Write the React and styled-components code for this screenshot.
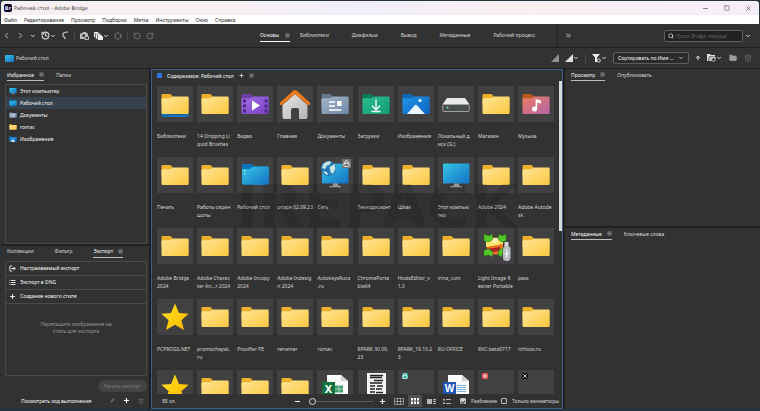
import React from 'react';
import styled, { createGlobalStyle } from 'styled-components';
import { ArrowUp, ChevronDown, ChevronLeft, ChevronRight, ChevronsRight, Folder, History, List, Lock, LogOut, Menu, Minus, Pencil, Plus, RotateCcw, RotateCw, Search, Square, Trash2, X } from 'lucide-react';

const COLOR = {
  panel: '#323232',
  gap: '#1d1f21',
  line: '#4a4a4a',
  text: '#d6d6d6',
  bright: '#fafafa',
  dim: '#6c6c6c',
  blue: '#3e6086',
};

const GlobalStyle = createGlobalStyle`
  * {
    box-sizing: border-box;
  }
  body {
    margin: 0;
    background: #26343f;
  }
  button, input, select {
    font: inherit;
    color: inherit;
    margin: 0;
  }
  svg {
    display: block;
    flex-shrink: 0;
  }
`

const Window = styled.div`
  display: flex;
  flex-direction: column;
  height: 100vh;
  padding: 1px 1px 2px;
  font-family: 'Noto Sans', 'Open Sans', sans-serif;
  font-size: 5px;
  line-height: 8px;
  color: ${COLOR.text};
  background: #26343f;
`

const TitleBar = styled.header`
  display: flex;
  align-items: center;
  gap: 2px;
  height: 14px;
  padding: 0 7px 0 3px;
  font-family: 'DejaVu Sans', sans-serif;
  color: #3a3638;
  border-radius: 3px 3px 0 0;
  background: linear-gradient(90deg, #f6eff1 0%, #f7f0f2 30%, #efeefa 47%, #faeff0 68%, #f5eefa 100%);
`

const AppBadge = styled.span`
  width: 8px;
  height: 8px;
  border-radius: 2px;
  text-align: center;
  font-weight: 700;
  color: #e4e4ff;
  background: #05052a;
`

const WindowButtons = styled.div`
  display: flex;
  gap: 15px;
  margin-left: auto;
`

const MenuBar = styled.nav`
  display: flex;
  align-items: center;
  gap: 7px;
  height: 9px;
  padding: 0 3px;
  background: #fff;
`

const PlainButton = styled.button`
  display: flex;
  align-items: center;
  padding: 0;
  border: none;
  background: none;
  white-space: nowrap;
  cursor: pointer;
  color: ${({$color}) => $color || 'inherit'};
`

const MenuItem = styled(PlainButton)`
  color: #1c1c1c;
`

const Toolbar = styled.div`
  display: flex;
  align-items: center;
  height: 23px;
  flex-shrink: 0;
  padding-right: 8px;
  background: ${COLOR.panel};
`

const ToolGroup = styled.div`
  display: flex;
  align-items: center;
  gap: ${({$gap}) => $gap}px;
  margin-left: ${({$push}) => $push ? 'auto' : '0'};
`

const NavTools = styled.div`
  display: flex;
  align-items: center;
  gap: 5px;
  width: 259px;
  padding-left: 1px;
`

const Divider = styled.span`
  width: 1px;
  height: ${({$tall}) => $tall ? '22px' : '9px'};
  background: ${({$tall}) => $tall ? '#242424' : '#484848'};
`

const Workspaces = styled.nav`
  display: flex;
  gap: 23px;
`

const Workspace = styled(PlainButton)`
  height: 12px;
  gap: 6px;
  color: ${({$active}) => $active ? COLOR.bright : COLOR.text};
  border-bottom: 1px solid ${({$active}) => $active ? COLOR.bright : 'transparent'};
  margin-right: ${({$active}) => $active ? '-13px' : '0'};
`

const MoreWorkspaces = styled.div`
  display: flex;
  align-items: center;
  gap: 7px;
  margin-left: 22px;
`

const SearchBox = styled.label`
  display: flex;
  align-items: center;
  gap: 2px;
  width: 79px;
  height: 12px;
  padding: 0 3px;
  border: 1px solid #606060;
  border-radius: 2px;
  background: #222;
  input {
    flex: 1;
    min-width: 0;
    padding: 0;
    border: none;
    outline: none;
    background: none;
    &::placeholder {
      color: #666;
      font-style: italic;
      opacity: 1;
    }
  }
`

const PathBar = styled.div`
  display: flex;
  align-items: center;
  height: 21px;
  flex-shrink: 0;
  padding: 0 7px 0 4px;
  gap: 2px;
  border-top: 1px solid ${COLOR.gap};
  background: ${COLOR.panel};
`

const SortSelect = styled.div`
  display: flex;
  align-items: center;
  width: 76px;
  height: 12px;
  padding: 0 4px;
  border: 1px solid #5c5c5c;
  border-radius: 2px;
  background: #2b2b2b;
  select {
    flex: 1;
    min-width: 0;
    padding: 0;
    border: none;
    outline: none;
    appearance: none;
    background: none;
    color: ${COLOR.bright};
  }
`

const Main = styled.main`
  display: grid;
  grid-template-columns: 148px minmax(0, 1fr) 194px;
  gap: 2px;
  flex: 1;
  min-height: 0;
  padding-top: 1px;
  background: ${COLOR.gap};
`

const Column = styled.div`
  display: flex;
  flex-direction: column;
  gap: 2px;
  min-height: 0;
`

const Panel = styled.section`
  display: flex;
  flex-direction: column;
  flex: ${({$flex}) => $flex} 1 0;
  min-height: 0;
  padding: 0 2px 0 4px;
  background: ${COLOR.panel};
`

const PanelTabs = styled.div`
  display: flex;
  flex-shrink: 0;
  align-items: flex-start;
  height: 15px;
  padding-left: 2px;
  gap: ${({$gap}) => $gap}px;
`

const PanelTab = styled(PlainButton)`
  height: 12px;
  gap: 5px;
  color: ${({$active}) => $active ? COLOR.bright : COLOR.text};
  border-bottom: 1px solid ${({$active}) => $active ? '#bdbdbd' : 'transparent'};
`

const Box = styled.div`
  flex: 1;
  min-height: 0;
  border: 1px solid ${COLOR.line};
  border-radius: 1px;
`

const FavoriteItem = styled.button`
  display: flex;
  align-items: center;
  gap: 3px;
  width: 100%;
  height: 12px;
  padding: 0 3px;
  border: none;
  text-align: left;
  color: ${COLOR.bright};
  background: ${({$selected}) => $selected ? '#35424e' : 'none'};
`

const ExportItem = styled.button`
  display: flex;
  align-items: center;
  gap: 4px;
  width: 100%;
  height: 14px;
  padding: 0 3px;
  border: none;
  border-bottom: 1px solid ${COLOR.line};
  text-align: left;
  color: ${COLOR.bright};
  background: none;
`

const DropHint = styled.p`
  margin: 17px 30px;
  line-height: 7px;
  text-align: center;
  color: #969696;
`

const StartButton = styled.button`
  align-self: flex-end;
  height: 12px;
  margin-top: 4px;
  padding: 0 6px;
  border: none;
  border-radius: 6px;
  color: #7c7c7c;
  background: #434343;
`

const ExportFooter = styled.div`
  display: flex;
  align-items: center;
  height: 17px;
  padding: 0 3px 0 16px;
  gap: 8px;
  a {
    flex: 1;
    color: ${COLOR.bright};
    text-decoration: none;
  }
`

const Content = styled.section`
  position: relative;
  display: flex;
  flex-direction: column;
  min-height: 0;
  border: 1px solid ${COLOR.blue};
  background: ${COLOR.panel};
`

const ContentHeader = styled.div`
  display: flex;
  align-items: center;
  flex-shrink: 0;
  gap: 5px;
  height: 11px;
  padding-left: 5px;
  color: ${COLOR.bright};
`

const BlueMark = styled.span`
  width: 5px;
  height: 5px;
  background: #2f74dc;
`

const Scroller = styled.div`
  display: flex;
  flex: 1;
  min-height: 0;
  overflow: hidden;
`

const Files = styled.ul`
  display: grid;
  grid-template-columns: repeat(10, 36px);
  grid-auto-rows: 71px;
  justify-content: space-between;
  flex: 1;
  margin: 0;
  padding: 5px 5px 0;
  list-style: none;
`

const Thumb = styled.div`
  position: relative;
  width: 36px;
  height: 36px;
  margin-bottom: 10px;
  background: #414141;
`

const FileName = styled.div`
  white-space: pre;
`

const LockBadge = styled.span`
  position: absolute;
  top: 2px;
  right: 2px;
  padding: 1px;
  color: #f0f0f0;
  background: #737373;
`

const AppMark = styled.span`
  position: absolute;
  top: 3px;
  left: 4px;
  width: 6px;
  height: 6px;
  border-radius: 1px;
  color: #fff;
  background: ${({$color}) => $color};
`

const ScrollBar = styled.div`
  width: 3px;
  height: 48%;
  background: #d3dad9;
`

const Watermark = styled.div`
  position: absolute;
  top: 103px;
  left: 84px;
  font: 700 59px/68px 'DejaVu Sans', sans-serif;
  color: rgba(20, 20, 20, 0.16);
  pointer-events: none;
`

const ContentFooter = styled.footer`
  display: flex;
  align-items: center;
  flex-shrink: 0;
  height: 14px;
  padding: 0 3px 0 10px;
`

const Zoom = styled.input`
  width: 64px;
  height: 8px;
  margin: 0 6px 0 8px;
  appearance: none;
  background: linear-gradient(#5a5a5a, #5a5a5a) center / 100% 1px no-repeat;
  &::-webkit-slider-thumb {
    appearance: none;
    width: 7px;
    height: 7px;
    border: 1px solid #d6d6d6;
    border-radius: 50%;
    background: ${COLOR.panel};
  }
`

const ViewModes = styled.div`
  display: flex;
  gap: 2px;
  margin: 0 2px 0 6px;
`

const ViewButton = styled.button`
  display: flex;
  align-items: center;
  justify-content: center;
  width: 14px;
  height: 12px;
  padding: 0;
  border: none;
  color: ${({$active}) => $active ? '#fff' : '#b5b5b5'};
  background: ${({$active}) => $active ? '#505050' : 'none'};
`

const Check = styled.label`
  display: flex;
  align-items: center;
  gap: 5px;
  margin-left: 4px;
  white-space: nowrap;
  input {
    display: grid;
    place-items: center;
    width: 6px;
    height: 6px;
    appearance: none;
    border: 1px solid #bdbdbd;
    border-radius: 1px;
    &:checked {
      background: #d2d2d2;
    }
    &:checked::after {
      content: '';
      width: 3px;
      height: 2px;
      border: solid #333;
      border-width: 0 0 1px 1px;
      transform: rotate(-45deg);
    }
  }
`

const Gradients = () => (
  <svg width="0" height="0" aria-hidden="true">
    <defs>
      {[
        ['yellow', '#ffe596', '#fdc83f'],
        ['purple', '#a070e6', '#7b3fc4'],
        ['steel', '#a5b6ca', '#6d86a3'],
        ['green', '#2fbd90', '#129a75'],
        ['azure', '#2095e8', '#0c62bf'],
        ['sunset', '#ec7c60', '#b565a8'],
        ['screen', '#35c6e4', '#1470c4'],
        ['silver', '#e6e6e6', '#b3b3b3'],
        ['gold', '#ffe11b', '#ffb900'],
      ].map(([id, from, to]) => (
        <linearGradient key={id} id={id} x1="0" y1="0" x2="1" y2="1">
          <stop offset="0" stopColor={from} />
          <stop offset="1" stopColor={to} />
        </linearGradient>
      ))}
    </defs>
  </svg>
)

const FolderShape = ({ tab = '#efb02c', fill = 'yellow', children }) => (
  <>
    <path d="M4.5 9q0-1 1-1h7.2q.8 0 1.4.6l2 2.4H29q2 0 2 2v6H4.5z" fill={tab} />
    <path d="M4.5 13.6q0-1.3 1.3-1.3h7.2l3.3-1.8H30.4q1.3 0 1.3 1.3v15q0 1.3-1.3 1.3H5.8q-1.3 0-1.3-1.3z" fill={`url(#${fill})`} />
    {children}
  </>
)

const MonitorShape = () => (
  <>
    <rect x="5" y="6.5" width="26.5" height="20" rx="1" fill="url(#screen)" />
    <path d="M16 26.500h5v2l3 .9v.8H12v-.8l4-.9z" fill="#a9b0b5" />
  </>
)

const drawings = {
  folder: <FolderShape />,
  library: <FolderShape><path d="M4.500 28.200h27.200v2.300q0 .5-.6.500h-26q-.6 0-.6-.5z" fill="#1171b8" /></FolderShape>,
  video: (
    <FolderShape tab="#6b3fa5" fill="purple">
      <path d="M6 13.500h3v3H6zm0 5h3v3H6zm0 5h3v3H6zM27.500 13.500h3v3h-3zm0 5h3v3h-3zm0 5h3v3h-3z" fill="#4c2685" />
      <path d="M15 14.500l8 5-8 5z" fill="#fff" />
    </FolderShape>
  ),
  home: (
    <>
      <path d="M5.500 19L18 8l12.500 11v12q0 2-2 2h-6.500v-9q0-2-2-2h-4q-2 0-2 2v9H7.500q-2 0-2-2z" fill="url(#silver)" />
      <path d="M3 18.500q-.8-1 .2-2L16.500 4.600q1.500-1.200 3 0L32.800 16.500q1 1 .2 2t-2.200.2L18 8 5.200 18.700q-1.200.8-2.200-.2z" fill="#ee7a1c" />
    </>
  ),
  documents: (
    <FolderShape tab="#66798d" fill="steel">
      <path d="M12 16h6M12 20h6M12 24h12.500" stroke="#fff" strokeWidth="1.500" />
      <path d="M20 15h4.500v5H20z" fill="#fff" />
    </FolderShape>
  ),
  downloads: (
    <FolderShape tab="#0a7d55" fill="green">
      <path d="M18 13.500v10M14 19.800l4 4 4-4M13.500 25.500h9" fill="none" stroke="#fff" strokeWidth="1.300" />
    </FolderShape>
  ),
  images: (
    <FolderShape tab="#1167b8" fill="azure">
      <path d="M9 28l7.500-8.500q1.300-1.300 2.600 0L27 28z" fill="#e9f5ff" />
      <circle cx="22" cy="14.500" r="1.500" fill="#fff" />
    </FolderShape>
  ),
  music: (
    <FolderShape tab="#bb5a1f" fill="sunset">
      <circle cx="16.500" cy="23" r="2.500" fill="#fff" />
      <path d="M17.600 23V13l5.400 1.500v3l-3.800-1V23z" fill="#fff" />
    </FolderShape>
  ),
  drive: (
    <>
      <path d="M9 12h18l4.500 6.500H4.500z" fill="#e9e9e9" />
      <rect x="4.800" y="18.500" width="26.400" height="7" rx="1" fill="#4a4d4e" stroke="#a8a8a8" strokeWidth=".9" />
      <circle cx="9.500" cy="21.500" r="1" fill="#6ee089" />
    </>
  ),
  desktop: (
    <>
      <path d="M5 8q0-1 1-1h9l2 2.500H31v18H6.500Q5 27.500 5 26z" fill="#0873bd" />
      <path d="M5 12h7.500l4-2.500h14q1.500 0 1.500 1.500v14.500q0 2.500-3 2.500H7q-2 0-2-2z" fill="url(#screen)" />
      <path d="M7 14h1.500M7 17h1.500" stroke="#d8f6ff" />
    </>
  ),
  network: (
    <>
      <MonitorShape />
      <circle cx="11.500" cy="11.500" r="7.500" fill="#2378b5" />
      <path d="M6 7.500q4-4.500 8-3l-1 3-3 1-2 3.500-3-1zM12.500 10l5-3 1 5-3 5-2-2zM6 14l4 1 1 3q-3 0-5-4z" fill="#c6e5e6" />
    </>
  ),
  computer: <MonitorShape />,
  star: <path d="M18 4.500l4 9.500 9.700.8-7.300 6.400 2.600 9.900L18 25.800l-9 5.300 2.600-9.900-7.300-6.400 9.700-.8z" fill="url(#gold)" />,
  resizer: (
    <>
      <path d="M9 9l16 1v16l-16 1z" fill="#ef7421" />
      <path d="M8 13l17-2v5L8 19z" fill="#ffe66b" />
      <path d="M8 21l14-2v4L8 25z" fill="#a82325" />
      <path d="M13 10h8l-3 5h-3z" fill="#fff1be" />
      <path d="M6 6l5 2 3-2 1 5-4 3-5-1zM28 6l-4 2-3-2-1 5 3 3 5-1zM6 28l5-1 3 2 1-5-4-3-5 1zM25 20l-4 2-1 5 4 2z" fill="#55c829" stroke="#226e12" strokeWidth=".5" />
      <rect x="26.500" y="14" width="4" height="6" fill="#d6d6d6" />
      <rect x="25" y="18" width="7.500" height="15" rx="3.500" fill="#b9bdc3" />
      <path d="M28.700 21v9m-2-5l2 2 2-3" fill="none" stroke="#f4f4f4" />
    </>
  ),
  excel: (
    <>
      <path d="M10 5h14l7 6v25H10z" fill="#fafafa" />
      <path d="M24 5v6h7z" fill="#cfd4d1" />
      <path d="M18 15.500h8v7h-8z" fill="#3d9c6b" />
      <path d="M18 19h8M22 15.500v7" stroke="#cfe9da" strokeWidth=".7" />
      <rect x="5" y="12" width="13" height="13" fill="#12703f" />
      <text x="11.500" y="22.500" textAnchor="middle" fontSize="11" fontWeight="700" fill="#fff">X</text>
    </>
  ),
  word: (
    <>
      <path d="M10 5h14l7 6v25H10z" fill="#fafafa" />
      <path d="M24 5v6h7z" fill="#ccd3de" />
      <path d="M19 15.500h9M19 17.500h9M19 19.500h9M19 21.500h9" stroke="#82b1dc" />
      <rect x="5" y="12" width="13" height="13" fill="#1d56b5" />
      <text x="11.500" y="22" textAnchor="middle" fontSize="10" fontWeight="700" fill="#fff">W</text>
    </>
  ),
  sheet: (
    <>
      <path d="M9 3h19v33H9z" fill="#f3f3f3" />
      <path d="M12 5.500h13M12 7.500h12M16 10.500h9M12 13h12M12 16h5M19 16h6M12 19h5M18 19h6M12 22h5M18 22.500h7" stroke="#222" strokeWidth="1.600" />
    </>
  ),
}

const Drawing = ({ name, size = 36 }) => (
  <svg width={size} height={size} viewBox={size < 36 ? '3 3 30 30' : '0 0 36 36'}>{drawings[name]}</svg>
)

const TriangleIcon = ({ color }) => (
  <svg width="8" height="8" viewBox="0 0 8 8"><path d="M8 0v8H0z" fill={color} /></svg>
)

const CameraIcon = () => (
  <svg width="9" height="8" viewBox="0 0 9 8">
    <path d="M0 1.500h2L3 0h3l.8 1.500H8V4H5v3H0z" fill="#bdbdbd" />
    <circle cx="3.800" cy="3.800" r="1.500" fill={COLOR.panel} />
    <path d="M5 4.500h3.500v3H5z" fill="none" stroke="#bdbdbd" />
  </svg>
)

const StackIcon = () => (
  <svg width="9" height="8" viewBox="0 0 9 8">
    <path d="M0 0h4v1H1v4H0zM2 1.500h4v1H3v4H2zM4 3h3l2 2v3H4z" fill="#efefef" stroke="#efefef" strokeWidth=".4" />
  </svg>
)

const FilterIcon = () => (
  <svg width="9" height="9" viewBox="0 0 9 9">
    <path d="M0 0h8L5 3.500V8H3V3.500z" fill="#ececec" />
    <circle cx="6.800" cy="6.500" r="1.600" fill={COLOR.panel} stroke="#ececec" strokeWidth=".9" />
  </svg>
)

const RecentFolderIcon = () => (
  <svg width="9" height="8" viewBox="0 0 9 8">
    <path d="M0 0h3l1 1h4v1.500H2L1 7H0z" fill="#dedede" />
    <path d="M2.500 3H9L7.500 7h-6z" fill="#bdbdbd" />
    <circle cx="6.500" cy="5.500" r="1.800" fill={COLOR.panel} stroke="#ececec" strokeWidth=".7" />
  </svg>
)

const GridIcon = () => (
  <svg width="10" height="7" viewBox="0 0 10 7">
    <path d="M.5.500h9v6h-9zM.5 3.500h9M3.500.500v6M6.500.500v6" fill="none" stroke="currentColor" strokeWidth=".7" />
  </svg>
)

const ThumbsIcon = () => (
  <svg width="8" height="6" viewBox="0 0 8 6">
    <path d="M0 0h2v2.500H0zM3 0h2v2.500H3zM6 0h2v2.500H6zM0 3.500h2V6H0zM3 3.500h2V6H3zM6 3.500h2V6H6z" fill="currentColor" />
  </svg>
)

const DetailsIcon = () => (
  <svg width="9" height="5" viewBox="0 0 9 5"><path d="M0 0h5v5H0zM6 0h3v1.300H6zM6 2h3v1H6zM6 4h3v1H6z" fill="currentColor" /></svg>
)

const ListIcon = () => (
  <svg width="8" height="5" viewBox="0 0 8 5"><path d="M0 0h2v1.500H0zM3 0h5v1H3zM0 3.500h2V5H0zM3 4h5v1H3z" fill="currentColor" /></svg>
)

const files = [
  ['library', 'Библиотеки'],
  ['folder', '14 Dripping Li\nquid Brushes'],
  ['video', 'Видео'],
  ['home', 'Главная'],
  ['documents', 'Документы'],
  ['downloads', 'Загрузки'],
  ['images', 'Изображения'],
  ['drive', 'Локальный д\nиск (G:)'],
  ['folder', 'Магазин'],
  ['music', 'Музыка'],
  ['folder', 'Печать'],
  ['folder', 'Работы скрин\nшоты'],
  ['desktop', 'Рабочий стол'],
  ['folder', 'рпарк 02.09.23'],
  ['network', 'Сеть'],
  ['folder', 'Технодисконт'],
  ['folder', 'Шлак'],
  ['computer', 'Этот компью\nтер'],
  ['folder', 'Adobe 2024'],
  ['folder', 'Adobe Autode\nsk'],
  ['folder', 'Adobe Bridge\n2024'],
  ['folder', 'Adobe Charac\nter An...r 2024'],
  ['folder', 'Adobe Incopy\n2024'],
  ['folder', 'Adobe Indesig\nn 2024'],
  ['folder', 'AutokeysRuza\n.ru'],
  ['folder', 'ChromePorta\nble64'],
  ['folder', 'HostsEditor_v\n1.3'],
  ['folder', 'irina_cum'],
  ['resizer', 'Light Image R\nesizer Portable'],
  ['folder', 'pass'],
  ['star', 'PCPROGS.NET'],
  ['folder', 'promozhaysk.\nru'],
  ['folder', 'Proxifier PE'],
  ['folder', 'renamer'],
  ['folder', 'romac'],
  ['folder', 'RPARK 30.09.\n23'],
  ['folder', 'RPARK_19.10.2\n3'],
  ['folder', 'RU-OFFICE'],
  ['folder', 'RVC-beta0717'],
  ['folder', 'rzhivov.ru'],
  ['star'],
  ['folder'],
  ['folder'],
  ['folder'],
  ['excel'],
  ['sheet'],
  ['mark', '', '#27a58c', Lock],
  ['word'],
  ['mark', '', '#e0565b', Plus],
  ['mark', '', '#151515', X],
]

const favorites = [
  ['computer', 'Этот компьютер'],
  ['desktop', 'Рабочий стол'],
  ['documents', 'Документы'],
  ['folder', 'romac'],
  ['images', 'Изображения'],
]

const Tab = ({ children }) => (
  <PanelTab $active>{children}<Menu size={5} /></PanelTab>
)

export default function App() {
  return (
    <Window>
      <GlobalStyle />
      <Gradients />
      <TitleBar>
        <AppBadge>Br</AppBadge>
        <span>Рабочий стол - Adobe Bridge</span>
        <WindowButtons>
          <PlainButton aria-label="Свернуть"><Minus size={7} /></PlainButton>
          <PlainButton aria-label="Развернуть"><Square size={6} /></PlainButton>
          <PlainButton aria-label="Закрыть"><X size={7} /></PlainButton>
        </WindowButtons>
      </TitleBar>
      <MenuBar>
        {['Файл', 'Редактирование', 'Просмотр', 'Подборки', 'Метка', 'Инструменты', 'Окно', 'Справка'].map((name) => (
          <MenuItem key={name}>{name}</MenuItem>
        ))}
      </MenuBar>
      <Toolbar>
        <NavTools>
          <PlainButton aria-label="Назад" $color="#858585"><ChevronLeft size={9} strokeWidth={3} /></PlainButton>
          <PlainButton aria-label="Вперёд" $color="#858585"><ChevronRight size={9} strokeWidth={3} /></PlainButton>
          <PlainButton aria-label="Папки"><ChevronDown size={6} strokeWidth={4} /></PlainButton>
          <PlainButton aria-label="Недавние"><History size={9} strokeWidth={3} /><ChevronDown size={6} strokeWidth={4} /></PlainButton>
          <PlainButton aria-label="Бумеранг">
            <svg width="8" height="9" viewBox="0 0 8 9"><path d="M7 1Q1 1 2 4.500L4.500 8" fill="none" stroke="currentColor" strokeWidth="1.200" /></svg>
          </PlainButton>
          <Divider />
          <PlainButton aria-label="Камера"><CameraIcon /></PlainButton>
          <PlainButton aria-label="Уточнить"><StackIcon /><ChevronDown size={6} strokeWidth={4} /></PlainButton>
          <PlainButton aria-label="Camera Raw" $color={COLOR.dim}>
            <svg width="8" height="8" viewBox="0 0 8 8"><circle cx="4" cy="4" r="3" fill="none" stroke="currentColor" strokeWidth="1.500" strokeDasharray="2.400 .74" /></svg>
          </PlainButton>
          <Divider />
          <PlainButton aria-label="Повернуть влево" $color={COLOR.dim}><RotateCcw size={8} strokeWidth={3} /></PlainButton>
          <PlainButton aria-label="Повернуть вправо" $color={COLOR.dim}><RotateCw size={8} strokeWidth={3} /></PlainButton>
        </NavTools>
        <Workspaces>
          <Workspace $active>Основы<Menu size={5} /></Workspace>
          {['Библиотеки', 'Диафильм', 'Вывод', 'Метаданные', 'Рабочий процесс'].map((name) => (
            <Workspace key={name}>{name}</Workspace>
          ))}
        </Workspaces>
        <MoreWorkspaces>
          <Divider $tall />
          <PlainButton aria-label="Ещё"><ChevronsRight size={7} strokeWidth={3} /></PlainButton>
        </MoreWorkspaces>
        <ToolGroup $gap={2} $push>
          <SearchBox>
            <Search size={6} strokeWidth={3} />
            <input placeholder="Поиск Bridge: текуще" aria-label="Поиск" />
          </SearchBox>
          <ChevronDown size={6} strokeWidth={4} />
        </ToolGroup>
      </Toolbar>
      <PathBar>
        <svg width="9" height="7" viewBox="0 0 9 7"><rect width="9" height="7" rx="1" fill="url(#screen)" /></svg>
        <span>Рабочий стол</span>
        <ToolGroup $gap={6} $push>
          <PlainButton aria-label="Качество"><TriangleIcon color="#909090" /></PlainButton>
          <PlainButton aria-label="Параметры качества"><TriangleIcon color="#dedede" /><ChevronDown size={6} strokeWidth={4} /></PlainButton>
          <Divider />
          <PlainButton aria-label="Фильтр"><FilterIcon /><ChevronDown size={6} strokeWidth={4} /></PlainButton>
          <SortSelect>
            <select aria-label="Сортировка">
              <option>Сортировать по Имя ...</option>
            </select>
            <ChevronDown size={6} strokeWidth={3} />
          </SortSelect>
          <PlainButton aria-label="По возрастанию"><ArrowUp size={6} strokeWidth={4} /></PlainButton>
          <ToolGroup $gap={7}>
            <PlainButton aria-label="Недавние папки"><RecentFolderIcon /><ChevronDown size={6} strokeWidth={4} /></PlainButton>
            <PlainButton aria-label="Новая папка" $color="#9c9c9c"><Folder size={8} fill="currentColor" /></PlainButton>
            <PlainButton aria-label="Удалить" $color={COLOR.dim}><Trash2 size={8} /></PlainButton>
          </ToolGroup>
        </ToolGroup>
      </PathBar>
      <Main>
        <Column>
          <Panel $flex={174}>
            <PanelTabs $gap={12}>
              <Tab>Избранное</Tab>
              <PanelTab>Папки</PanelTab>
            </PanelTabs>
            <Box>
              {favorites.map(([icon, name], i) => (
                <FavoriteItem key={name} $selected={i === 1}>
                  <Drawing name={icon} size={8} />
                  {name}
                </FavoriteItem>
              ))}
            </Box>
          </Panel>
          <Panel $flex={163}>
            <PanelTabs $gap={21}>
              <PanelTab>Коллекции</PanelTab>
              <PanelTab>Фильтр</PanelTab>
              <Tab>Экспорт</Tab>
            </PanelTabs>
            <Box>
              <ExportItem><LogOut size={7} strokeWidth={3} />Настраиваемый экспорт</ExportItem>
              <ExportItem><List size={7} strokeWidth={3} />Экспорт в DNG</ExportItem>
              <ExportItem><Plus size={7} strokeWidth={3} />Создание нового стиля</ExportItem>
              <DropHint>Перетащите изображения на стиль для экспорта</DropHint>
            </Box>
            <StartButton disabled>Начать экспорт</StartButton>
            <ExportFooter>
              <a href="#progress">Посмотреть ход выполнения</a>
              <PlainButton aria-label="Изменить" $color={COLOR.dim}><Pencil size={5} fill="currentColor" /></PlainButton>
              <PlainButton aria-label="Добавить" $color="#fff"><Plus size={7} strokeWidth={4} /></PlainButton>
              <PlainButton aria-label="Удалить" $color={COLOR.dim}><Trash2 size={6} /></PlainButton>
            </ExportFooter>
          </Panel>
        </Column>
        <Content>
          <ContentHeader>
            <BlueMark />
            <span>Содержимое: Рабочий стол</span>
            <PlainButton aria-label="Добавить вкладку"><Plus size={5} strokeWidth={4} /></PlainButton>
            <Menu size={5} />
          </ContentHeader>
          <Scroller>
            <Files>
              {files.map(([icon, name, color, Mark], i) => (
                <li key={i}>
                  <Thumb>
                    {icon === 'mark' ? <AppMark $color={color}><Mark size={6} strokeWidth={3} /></AppMark> : <Drawing name={icon} />}
                    {icon === 'network' && <LockBadge><Lock size={7} strokeWidth={3} /></LockBadge>}
                  </Thumb>
                  <FileName>{name}</FileName>
                </li>
              ))}
            </Files>
            <ScrollBar />
          </Scroller>
          <Watermark>IREPACK</Watermark>
          <ContentFooter>
            <span>88 эл.</span>
            <ToolGroup $gap={0} $push>
              <PlainButton aria-label="Уменьшить" $color="#fff"><Minus size={7} strokeWidth={4} /></PlainButton>
              <Zoom type="range" min="0" max="100" defaultValue="0" aria-label="Размер миниатюр" />
              <PlainButton aria-label="Увеличить" $color="#fff"><Plus size={7} strokeWidth={4} /></PlainButton>
              <ViewModes>
                <ViewButton aria-label="Сетка"><GridIcon /></ViewButton>
                <ViewButton aria-label="Миниатюры" $active><ThumbsIcon /></ViewButton>
                <ViewButton aria-label="Сведения"><DetailsIcon /></ViewButton>
                <ViewButton aria-label="Список"><ListIcon /></ViewButton>
              </ViewModes>
              <Check><input type="checkbox" defaultChecked />Разбиение</Check>
              <Check><input type="checkbox" />Только миниатюры</Check>
            </ToolGroup>
          </ContentFooter>
        </Content>
        <Column>
          <Panel $flex={157}>
            <PanelTabs $gap={12}>
              <Tab>Просмотр</Tab>
              <PanelTab>Опубликовать</PanelTab>
            </PanelTabs>
          </Panel>
          <Panel $flex={180}>
            <PanelTabs $gap={12}>
              <Tab>Метаданные</Tab>
              <PanelTab>Ключевые слова</PanelTab>
            </PanelTabs>
          </Panel>
        </Column>
      </Main>
    </Window>
  );
}
